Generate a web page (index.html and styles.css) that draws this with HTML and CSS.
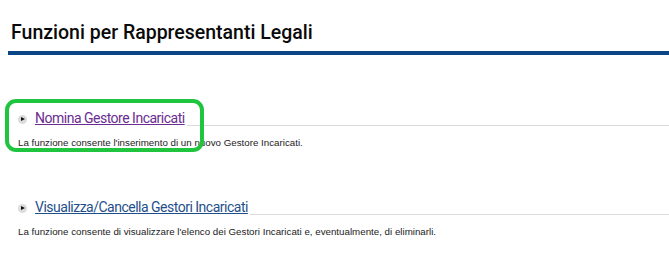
FILE: index.html
```html
<!DOCTYPE html>
<html lang="it">
<head>
  <meta charset="UTF-8">
  <title>Funzioni per Rappresentanti Legali</title>
  <link rel="stylesheet" href="styles.css">
</head>
<body>

  <h1 class="page-title">Funzioni per Rappresentanti Legali</h1>

  <div class="func func-first">
    <div class="func-head">
      <span class="bullet"></span>
      <a href="#" class="func-link visited">Nomina Gestore Incaricati</a>
      <span class="func-rule"></span>
    </div>
    <p class="func-desc">La funzione consente l'inserimento di un nuovo Gestore Incaricati.</p>
    <div class="highlight"></div>
  </div>

  <div class="func">
    <div class="func-head">
      <span class="bullet"></span>
      <a href="#" class="func-link">Visualizza/Cancella Gestori Incaricati</a>
      <span class="func-rule"></span>
    </div>
    <p class="func-desc">La funzione consente di visualizzare l'elenco dei Gestori Incaricati e, eventualmente, di eliminarli.</p>
  </div>

</body>
</html>
```

FILE: styles.css
```css
body { margin: 0; padding: 20px 0 0 8px; background: #fff; color: #111; font-family: "Liberation Sans", Arial, sans-serif; overflow: hidden; }

.page-title { font-family: Roboto, sans-serif; font-weight: 500; font-size: 19.5px; line-height: 26px; margin: 0; padding: 0 0 5px 3px; border-bottom: 4px solid #0b4787; color: #0a0a0a; }

.func { position: relative; padding-left: 10px; }
.func-first { margin-top: 54px; }
.func + .func { margin-top: 48px; }

.func-head { display: flex; align-items: flex-end; }
.bullet { width: 9px; height: 9px; border-radius: 50%; background: #dcdcdc; position: relative; margin: 0 8px 3px 0; flex: none; }
.bullet::after { content: ""; position: absolute; left: 3px; top: 2px; border-left: 4px solid #111; border-top: 2.5px solid transparent; border-bottom: 2.5px solid transparent; }

.func-link { font-family: Roboto, sans-serif; font-size: 14px; letter-spacing: -0.5px; line-height: 18px; color: #1f4f8b; text-decoration: underline; flex: none; }
.func-link.visited { color: #6a2c91; }
.func-rule { flex: 1; border-bottom: 1px solid #dcdcdc; margin-left: 2px; margin-bottom: 1px; }

.func-desc { font-size: 9.75px; line-height: 14px; margin: 9px 0 0; color: #222; }

.highlight { position: absolute; left: -3px; top: -10px; width: 191px; height: 45px; border: 4px solid #1fc43f; border-radius: 11px; }
```
